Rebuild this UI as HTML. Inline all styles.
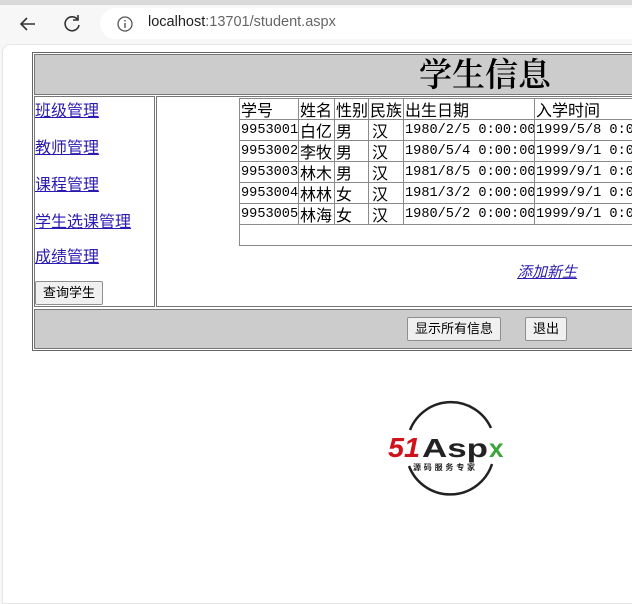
<!DOCTYPE html>
<html><head><meta charset="utf-8"><style>
*{margin:0;padding:0;box-sizing:border-box}
body{width:632px;height:582px;overflow:hidden;background:#f7f7f7;font-family:"Liberation Sans","Noto Sans CJK SC",sans-serif;position:relative}
.a{position:absolute}
.topstrip{left:0;top:0;width:632px;height:5px;background:#d9d9d9}
.page{left:2px;top:44px;width:640px;height:560px;background:#fff;border-radius:8px 0 0 0;border:1px solid #e6e6e6}
.url{left:100px;top:8px;width:560px;height:31px;background:#fff;border-radius:16px}
.cell{position:absolute;border:1px solid #8a8a8a;height:22px;font:16px "Noto Sans CJK SC",sans-serif;line-height:20px;padding-left:1px;white-space:nowrap;overflow:hidden;color:#000}
.m{font-family:"Liberation Mono","Noto Sans CJK SC",monospace;font-size:13.6px;line-height:22px}
.lnk{position:absolute;left:35px;font-size:16px;color:#2a1ab0;text-decoration:underline;font-family:"Noto Sans CJK SC",sans-serif;line-height:20px}
.btn{position:absolute;background:#f0f0f0;border:1px solid #8f8f8f;border-radius:2px;font:13px "Noto Sans CJK SC",sans-serif;text-align:center;line-height:20px;color:#000}
.h{padding-left:3px}
</style></head><body>
<div class="a topstrip"></div>
<div class="a url"></div>
<svg class="a" style="left:16px;top:12px" width="24" height="24" viewBox="0 0 24 24"><path d="M19 12H5M11 6l-6 6 6 6" fill="none" stroke="#333" stroke-width="1.6"/></svg>
<svg class="a" style="left:60px;top:12px" width="24" height="24" viewBox="0 0 24 24"><path d="M18 8a7 7 0 1 0 1 5M18 3v5h-5" fill="none" stroke="#333" stroke-width="1.6"/></svg>
<svg class="a" style="left:116px;top:15px" width="18" height="18" viewBox="0 0 18 18"><circle cx="9" cy="9" r="7" fill="none" stroke="#555" stroke-width="1.3"/><path d="M9 8v5M9 5v1.5" stroke="#555" stroke-width="1.4"/></svg>
<div class="a" style="left:148px;top:14px;font-size:14.5px;color:#202020">localhost<span style="color:#666">:13701/student.aspx</span></div>
<div class="a page"></div>

<div class="a" style="left:32px;top:52px;width:620px;height:299px;border:1px solid #666;border-right:none;background:#fff"></div>
<div class="a" style="left:34px;top:54px;width:620px;height:41px;background:#cccccc;border:1px solid #777;border-right:none"></div>
<div class="a" style="left:419px;top:52px;font:33px 'Noto Serif CJK SC',serif;font-weight:600;line-height:42px;color:#000">学生信息</div>
<div class="a" style="left:34px;top:96px;width:121px;height:211px;border:1px solid #777"></div>
<div class="a" style="left:156px;top:96px;width:500px;height:211px;border:1px solid #777;border-right:none"></div>
<div class="a" style="left:34px;top:309px;width:620px;height:40px;background:#cccccc;border:1px solid #777;border-right:none"></div>

<span class="lnk" style="top:99px">班级管理</span>
<span class="lnk" style="top:136px">教师管理</span>
<span class="lnk" style="top:173px">课程管理</span>
<span class="lnk" style="top:210px">学生选课管理</span>
<span class="lnk" style="top:245px">成绩管理</span>
<div class="btn" style="left:35px;top:281px;width:68px;height:24px">查询学生</div>

<div class="a" style="left:239px;top:98px;width:400px;height:148px;border:1px solid #8a8a8a;border-right:none"></div>
<div class="a" style="left:239px;top:98px">
<div class="cell" style="left:0;top:0;width:60px">学号</div>
<div class="cell" style="left:59px;top:0;width:37px">姓名</div>
<div class="cell" style="left:95px;top:0;width:35px">性别</div>
<div class="cell" style="left:129px;top:0;width:36px">民族</div>
<div class="cell" style="left:164px;top:0;width:132px">出生日期</div>
<div class="cell" style="left:295px;top:0;width:120px">入学时间</div>
</div>
<div class="a" style="left:239px;top:119px">
<div class="cell m" style="left:0;top:0;width:60px">9953001</div><div class="cell" style="left:59px;top:0;width:37px">白亿</div><div class="cell" style="left:95px;top:0;width:35px">男</div><div class="cell h" style="left:129px;top:0;width:36px">汉</div><div class="cell m" style="left:164px;top:0;width:132px">1980/2/5 0:00:00</div><div class="cell m" style="left:295px;top:0;width:120px">1999/5/8 0:00:00</div>
<div class="cell m" style="left:0;top:21px;width:60px">9953002</div><div class="cell" style="left:59px;top:21px;width:37px">李牧</div><div class="cell" style="left:95px;top:21px;width:35px">男</div><div class="cell h" style="left:129px;top:21px;width:36px">汉</div><div class="cell m" style="left:164px;top:21px;width:132px">1980/5/4 0:00:00</div><div class="cell m" style="left:295px;top:21px;width:120px">1999/9/1 0:00:00</div>
<div class="cell m" style="left:0;top:42px;width:60px">9953003</div><div class="cell" style="left:59px;top:42px;width:37px">林木</div><div class="cell" style="left:95px;top:42px;width:35px">男</div><div class="cell h" style="left:129px;top:42px;width:36px">汉</div><div class="cell m" style="left:164px;top:42px;width:132px">1981/8/5 0:00:00</div><div class="cell m" style="left:295px;top:42px;width:120px">1999/9/1 0:00:00</div>
<div class="cell m" style="left:0;top:63px;width:60px">9953004</div><div class="cell" style="left:59px;top:63px;width:37px">林林</div><div class="cell" style="left:95px;top:63px;width:35px">女</div><div class="cell h" style="left:129px;top:63px;width:36px">汉</div><div class="cell m" style="left:164px;top:63px;width:132px">1981/3/2 0:00:00</div><div class="cell m" style="left:295px;top:63px;width:120px">1999/9/1 0:00:00</div>
<div class="cell m" style="left:0;top:84px;width:60px">9953005</div><div class="cell" style="left:59px;top:84px;width:37px">林海</div><div class="cell" style="left:95px;top:84px;width:35px">女</div><div class="cell h" style="left:129px;top:84px;width:36px">汉</div><div class="cell m" style="left:164px;top:84px;width:132px">1980/5/2 0:00:00</div><div class="cell m" style="left:295px;top:84px;width:120px">1999/9/1 0:00:00</div>
</div>
<span class="a" style="left:517px;top:261px;font:italic 15px 'Noto Sans CJK SC',sans-serif;color:#2a1ab0;text-decoration:underline">添加新生</span>

<div class="btn" style="left:407px;top:317px;width:94px;height:24px">显示所有信息</div>
<div class="btn" style="left:525px;top:317px;width:42px;height:24px">退出</div>

<svg class="a" style="left:385px;top:400px" width="130" height="96" viewBox="0 0 130 96">
<path d="M25 30 A44 44 0 0 1 106 28" fill="none" stroke="#222" stroke-width="2.5"/>
<path d="M107 64 A44 44 0 0 1 24 66" fill="none" stroke="#222" stroke-width="2.5"/>
<text x="3" y="57" font-family="Liberation Sans" font-weight="bold" font-style="italic" font-size="28" fill="#d0131b" textLength="32" lengthAdjust="spacingAndGlyphs">51</text>
<text x="37" y="57" font-family="Liberation Sans" font-weight="bold" font-size="26" fill="#222" textLength="66" lengthAdjust="spacingAndGlyphs">Asp</text>
<text x="104" y="57" font-family="Liberation Sans" font-weight="bold" font-size="26" fill="#3aa53a">x</text>
<text x="28" y="70" font-family="Noto Sans CJK SC" font-weight="bold" font-size="8" fill="#222" textLength="62">源码服务专家</text>
</svg>
</body></html>
